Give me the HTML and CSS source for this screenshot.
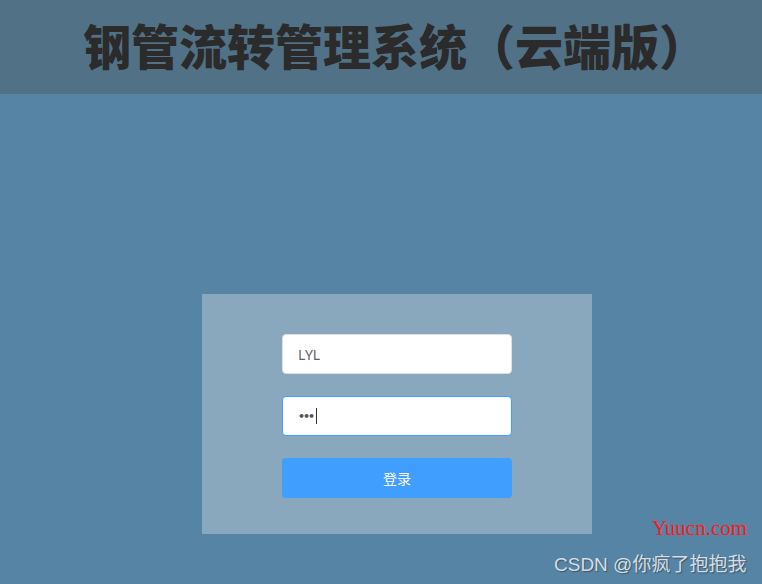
FILE: index.html
```html
<!DOCTYPE html>
<html lang="zh">
<head>
<meta charset="utf-8">
<title>钢管流转管理系统（云端版）</title>
<link rel="stylesheet" href="styles.css">
</head>
<body>
<header class="header">
  <h1 class="title">钢管流转管理系统（云端版）</h1>
</header>
<main class="main">
  <form class="login">
    <input class="field" type="text" value="LYL">
    <div class="field field-focus"><span class="dots">•••</span><span class="caret"></span></div>
    <button class="btn" type="button">登录</button>
  </form>
</main>
<div class="wm">Yuucn.com</div>
<div class="csdn">CSDN @你疯了抱抱我</div>
</body>
</html>
```
FILE: styles.css
```css
html, body { margin: 0; padding: 0; }
body {
  width: 762px;
  height: 584px;
  overflow: hidden;
  background: #5684a4;
  font-family: "Noto Sans", "Noto Sans CJK SC", sans-serif;
  position: relative;
}
.header {
  height: 94px;
  background: #517187;
  display: flex;
  align-items: center;
  justify-content: center;
  padding-left: 28px;
  box-sizing: border-box;
}
.title {
  margin: 0 0 6px;
  font-family: "Noto Sans CJK SC", sans-serif;
  font-weight: 900;
  font-size: 48px;
  color: #2b2b2b;
  line-height: 1;
  white-space: nowrap;
}
.main {
  display: flex;
  justify-content: center;
  padding-top: 200px;
  padding-left: 32px;
}
.login {
  width: 390px;
  height: 240px;
  box-sizing: border-box;
  padding: 40px 80px 0;
  background: #8aa8bd;
  display: flex;
  flex-direction: column;
  gap: 22px;
  margin: 0;
}
.field {
  width: 230px;
  height: 40px;
  box-sizing: border-box;
  border: 1px solid #dcdfe6;
  border-radius: 4px;
  background: #fff;
  padding: 0 15px;
  font-family: "Noto Sans", sans-serif;
  font-size: 14px;
  color: #606266;
  outline: none;
  margin: 0;
  display: flex;
  align-items: center;
}
.field-focus {
  border-color: #409eff;
}
.dots {
  font-size: 11px;
  letter-spacing: -2px;
  color: #555;
  font-family: "DejaVu Sans", sans-serif;
  font-weight: bold;
  margin-right: 3px;
}
.caret {
  display: inline-block;
  width: 1px;
  height: 16px;
  background: #333;
}
.btn {
  width: 230px;
  height: 40px;
  border: none;
  border-radius: 4px;
  background: #409eff;
  color: #fff;
  font-family: "Noto Sans CJK SC", sans-serif;
  font-size: 14px;
  padding: 0;
}
.wm {
  position: absolute;
  left: 652px;
  top: 516px;
  font-family: "Liberation Serif", serif;
  font-size: 21px;
  color: #ff1a1a;
}
.csdn {
  position: absolute;
  left: 554px;
  top: 549px;
  font-family: "Liberation Sans", "Noto Sans CJK SC", sans-serif;
  font-size: 19px;
  color: #d6dde3;
  text-shadow: 1px 1px 1px rgba(0,0,0,0.35);
  white-space: nowrap;
}
```
